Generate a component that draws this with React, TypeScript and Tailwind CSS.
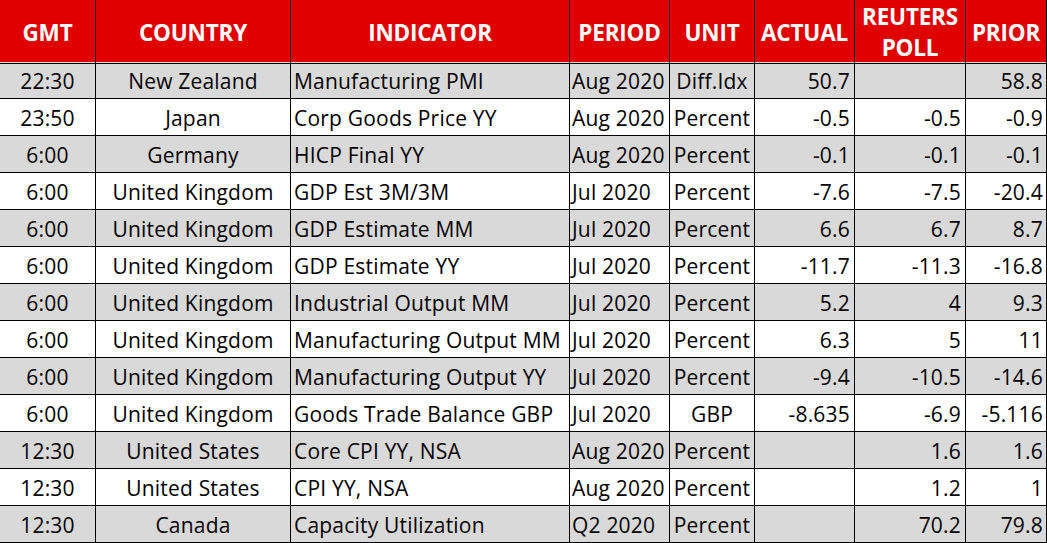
import React from "react";

type Row = {
  gmt: string;
  country: string;
  indicator: string;
  period: string;
  unit: string;
  actual: string;
  poll: string;
  prior: string;
};

const ROWS: Row[] = [
  { gmt: "22:30", country: "New Zealand", indicator: "Manufacturing PMI", period: "Aug 2020", unit: "Diff.Idx", actual: "50.7", poll: "", prior: "58.8" },
  { gmt: "23:50", country: "Japan", indicator: "Corp Goods Price YY", period: "Aug 2020", unit: "Percent", actual: "-0.5", poll: "-0.5", prior: "-0.9" },
  { gmt: "6:00", country: "Germany", indicator: "HICP Final YY", period: "Aug 2020", unit: "Percent", actual: "-0.1", poll: "-0.1", prior: "-0.1" },
  { gmt: "6:00", country: "United Kingdom", indicator: "GDP Est 3M/3M", period: "Jul 2020", unit: "Percent", actual: "-7.6", poll: "-7.5", prior: "-20.4" },
  { gmt: "6:00", country: "United Kingdom", indicator: "GDP Estimate MM", period: "Jul 2020", unit: "Percent", actual: "6.6", poll: "6.7", prior: "8.7" },
  { gmt: "6:00", country: "United Kingdom", indicator: "GDP Estimate YY", period: "Jul 2020", unit: "Percent", actual: "-11.7", poll: "-11.3", prior: "-16.8" },
  { gmt: "6:00", country: "United Kingdom", indicator: "Industrial Output MM", period: "Jul 2020", unit: "Percent", actual: "5.2", poll: "4", prior: "9.3" },
  { gmt: "6:00", country: "United Kingdom", indicator: "Manufacturing Output MM", period: "Jul 2020", unit: "Percent", actual: "6.3", poll: "5", prior: "11" },
  { gmt: "6:00", country: "United Kingdom", indicator: "Manufacturing Output YY", period: "Jul 2020", unit: "Percent", actual: "-9.4", poll: "-10.5", prior: "-14.6" },
  { gmt: "6:00", country: "United Kingdom", indicator: "Goods Trade Balance GBP", period: "Jul 2020", unit: "GBP", actual: "-8.635", poll: "-6.9", prior: "-5.116" },
  { gmt: "12:30", country: "United States", indicator: "Core CPI YY, NSA", period: "Aug 2020", unit: "Percent", actual: "", poll: "1.6", prior: "1.6" },
  { gmt: "12:30", country: "United States", indicator: "CPI YY, NSA", period: "Aug 2020", unit: "Percent", actual: "", poll: "1.2", prior: "1" },
  { gmt: "12:30", country: "Canada", indicator: "Capacity Utilization", period: "Q2 2020", unit: "Percent", actual: "", poll: "70.2", prior: "79.8" },
];

const GRID = "grid grid-cols-[96px_195px_279px_100px_85px_100px_111px_81px]";

const Head = ({ children }: { children: React.ReactNode }) => (
  <div className="flex items-center justify-center text-center border-r border-b border-black leading-[31px] pt-[1px]">
    {children}
  </div>
);

const cell = "flex items-center border-r border-b border-black pt-[3px] whitespace-nowrap";

export default function App() {
  return (
    <div className="w-[1047px] h-[543px] bg-white text-black font-['Open_Sans','Liberation_Sans',sans-serif] text-[21px] tracking-[0.2px] overflow-hidden">
      <div className={`${GRID} h-[62px] bg-[#e00000] text-white font-bold text-[22.5px] tracking-[-0.2px]`}>
        <Head>GMT</Head>
        <Head>COUNTRY</Head>
        <Head>INDICATOR</Head>
        <Head>PERIOD</Head>
        <Head>UNIT</Head>
        <Head>ACTUAL</Head>
        <Head>
          REUTERS
          <br />
          POLL
        </Head>
        <Head>PRIOR</Head>
      </div>

      {ROWS.map((r, i) => (
        <div
          key={i}
          className={`${GRID} h-[37px] ${i % 2 === 0 ? "bg-[#d9d9d9]" : "bg-white"}`}
        >
          <div className={`${cell} justify-center`}>{r.gmt}</div>
          <div className={`${cell} justify-center`}>{r.country}</div>
          <div className={`${cell} px-[3px]`}>{r.indicator}</div>
          <div className={`${cell} px-[2px]`}>{r.period}</div>
          <div className={`${cell} justify-center`}>{r.unit}</div>
          <div className={`${cell} justify-end pr-[4px]`}>{r.actual}</div>
          <div className={`${cell} justify-end pr-[4px]`}>{r.poll}</div>
          <div className={`${cell} justify-end pr-[3px]`}>{r.prior}</div>
        </div>
      ))}
    </div>
  );
}
